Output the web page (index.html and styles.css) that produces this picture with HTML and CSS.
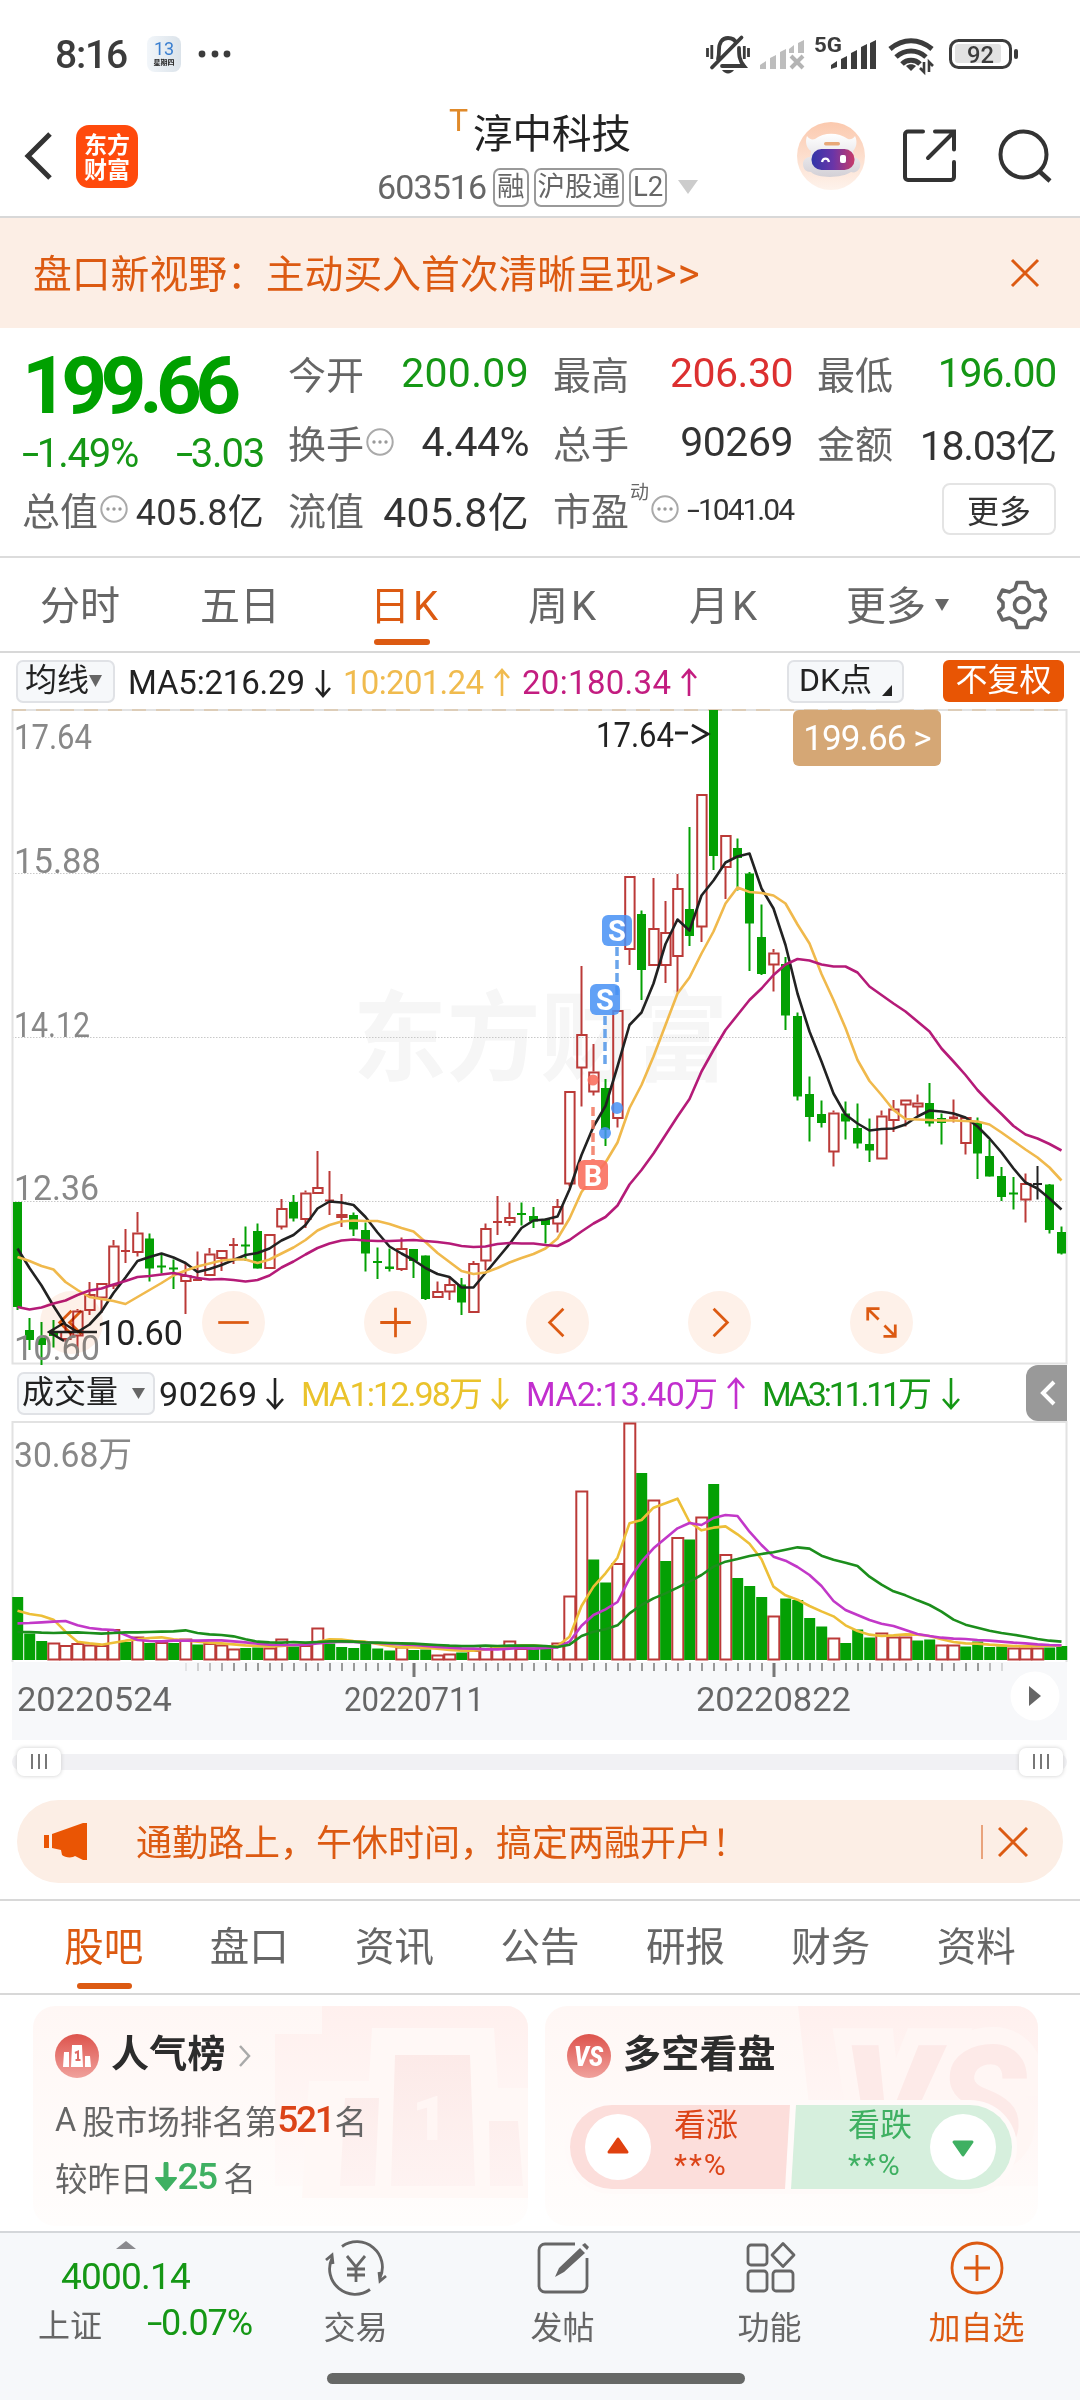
FILE: index.html
```html
<!DOCTYPE html>
<html lang="zh-CN">
<head>
<meta charset="utf-8">
<title>淳中科技 603516</title>
<link rel="stylesheet" href="styles.css">
</head>
<body>
<div class="phone">
  <div class="status">
    <span class="clock">8:16</span>
    <span class="cal"><b>13</b><i>星期四</i></span>
    <svg class="dots" width="34" height="10" viewBox="0 0 34 10"><circle cx="4" cy="5" r="3.4"/><circle cx="17" cy="5" r="3.4"/><circle cx="29" cy="5" r="3.4"/></svg>
    <svg class="sys" width="316" height="44" viewBox="704 32 316 44">
      <g fill="none" stroke="#3c3c3c" stroke-width="3.8">
        <path d="M718 59c1-3 1-6 1-9 0-7 3-12 9-12 4 0 7 2 8 5M739 48c0 7 0 12 5 18h-22M712 67.500l29.500-30" stroke-linecap="round"/>
        <path d="M707.500 48v9M711.800 45v14M748.500 48v9M744.300 46v13" stroke-width="2.800"/>
        <path d="M722 70h12c-3 4.500-9 4.500-12 0z" fill="#3c3c3c" stroke="none"/>
      </g>
      <g fill="#bdbdbd"><path d="M760 69v-4l6-4v8zM770 69V58l6-3v14zM780 69V52l6-3v20zM789 53v-4l5-4v8zM798 53V43l6-3v13z"/></g>
      <path d="M791 56l12 12M803 56l-12 12" stroke="#b4b4b4" stroke-width="4"/>
      <text x="814" y="52" textLength="28" lengthAdjust="spacingAndGlyphs" class="g5">5G</text>
      <path d="M831 69v-4l6-4v6zM841 69V59l6-3v13zM851 69V53l6-3v19zM861 69V47l6-3v25zM870 69V43l6-3v29z" fill="#3c3c3c"/>
      <g fill="none" stroke="#3c3c3c" stroke-width="5"><path d="M890 49c13-11 29-11 42 0M896 57c9-8 21-8 30 0M902 64c5-5 13-5 18 0"/></g>
      <path d="M906 66c3-2.500 7-2.500 10 0l-5 5z" fill="#3c3c3c"/>
      <path d="M924 62v10l-4-4M929 72V62l4 4" stroke="#3c3c3c" stroke-width="2.600" fill="none"/>
      <rect x="950.500" y="40.500" width="60" height="27" rx="8" fill="#fff" stroke="#3c3c3c" stroke-width="3"/>
      <rect x="955" y="44" width="46" height="19" rx="3" fill="#e2e2e2"/>
      <rect x="1014" y="49" width="4" height="10" rx="2" fill="#3c3c3c"/>
      <text x="967" y="63" textLength="27" lengthAdjust="spacingAndGlyphs" class="bat">92</text>
    </svg>
  </div>

  <header class="top">
    <svg class="back" width="30" height="52" viewBox="0 0 30 52"><path d="M26 4L4 26l22 22" fill="none" stroke="#333" stroke-width="5"/></svg>
    <div class="logo"><span>东方</span><span>财富</span></div>
    <div class="title">
      <div class="name"><sup>T</sup>淳中科技</div>
      <div class="code"><span class="num">603516</span><span class="tag">融</span><span class="tag">沪股通</span><span class="tag">L2</span>
        <svg width="20" height="14" viewBox="0 0 20 14"><path d="M0 0h20L10 14z" fill="#ccc"/></svg></div>
    </div>
    <svg class="robot" width="68" height="68" viewBox="0 0 68 68">
      <defs>
        <linearGradient id="halo" x1="0" y1="0" x2="0" y2="1"><stop offset="0" stop-color="#fbc9ae"/><stop offset="1" stop-color="#fef3ec"/></linearGradient>
        <linearGradient id="visor" x1="0" y1="0" x2="1" y2="0"><stop offset="0" stop-color="#3236a8"/><stop offset=".5" stop-color="#6a35a8"/><stop offset="1" stop-color="#c83a68"/></linearGradient>
        <linearGradient id="shell" x1="0" y1="0" x2="0" y2="1"><stop offset="0" stop-color="#fff"/><stop offset="1" stop-color="#d3d0d6"/></linearGradient>
      </defs>
      <circle cx="34" cy="34" r="34" fill="url(#halo)"/>
      <path d="M10 14c2 3 5 4 8 3 9-7 23-7 33 0 3 1 6-1 7-3 3 6 1 12-2 15l1 6c6 1 8 8 5 12-2 3-5 4-8 3-8 6-33 7-40 0-5 0-8-3-8-8 0-4 3-7 7-7l1-6c-5-3-6-10-4-15z" fill="url(#shell)"/>
      <rect x="27" y="20" width="16" height="3.500" rx="1.700" fill="#e8a878"/>
      <rect x="14.500" y="27" width="43" height="21" rx="10" fill="url(#visor)"/>
      <path d="M25 40c1-4.500 6-4.500 7 0" stroke="#fff" stroke-width="2.300" fill="none"/><rect x="43" y="33" width="6" height="8" rx="2" fill="#fff"/>
    </svg>
    <svg class="share" width="54" height="54" viewBox="0 0 54 54"><path d="M20 2.500H5a3 3 0 0 0-3 3V48a3 3 0 0 0 3 3h43a3 3 0 0 0 3-3V33M32 2.500h19v18M50 4L25 29" fill="none" stroke="#333" stroke-width="4" stroke-linecap="round"/></svg>
    <svg class="search" width="54" height="54" viewBox="0 0 54 54"><circle cx="25.500" cy="25.500" r="23" fill="none" stroke="#333" stroke-width="4"/><path d="M41 42l11 10" stroke="#333" stroke-width="4.500"/></svg>
  </header>

  <div class="banner"><span>盘口新视野：主动买入首次清晰呈现<b>&gt;&gt;</b></span>
    <svg width="30" height="30" viewBox="0 0 30 30"><path d="M2 2l26 26M28 2L2 28" stroke="#dc5a12" stroke-width="3"/></svg></div>

  <section class="quote">
    <div class="price"><strong>199.66</strong><div class="chg"><span><u>-</u>1.49%</span><span><u>-</u>3.03</span></div></div>
    <div class="cell c2"><label>今开</label><b class="g wide">200.09</b></div>
    <div class="cell c3"><label>最高</label><b class="r">206.30</b></div>
    <div class="cell c4"><label>最低</label><b class="g tight">196.00</b></div>
    <div class="cell c2 r2"><label>换手</label><svg class="info" viewBox="0 0 28 28"><use href="#i"/></svg><b>4.44%</b></div>
    <div class="cell c3 r2"><label>总手</label><b>90269</b></div>
    <div class="cell c4 r2"><label>金额</label><b class="tight">18.03亿</b></div>
    <div class="cell c1 r3"><label>总值</label><svg class="info" viewBox="0 0 28 28"><use href="#i"/></svg><b class="sm">405.8亿</b></div>
    <div class="cell c2 r3"><label>流值</label><b class="wide">405.8亿</b></div>
    <div class="cell c3 r3"><label>市盈</label><sup>动</sup><svg class="info" viewBox="0 0 28 28"><use href="#i"/></svg><b class="xs"><u>-</u>1041.04</b></div>
    <div class="cell c4 r3"><button class="more">更多</button></div>
    <svg width="0" height="0" class="defs"><defs><g id="i"><circle cx="14" cy="14" r="12.700" fill="none" stroke="#aaa" stroke-width="2"/><circle cx="8" cy="14" r="1.700" fill="#999"/><circle cx="14" cy="14" r="1.700" fill="#999"/><circle cx="20" cy="14" r="1.700" fill="#999"/></g></defs></svg>
  </section>

  <nav class="ktabs">
    <span>分时</span><span>五日</span><span class="on k">日K</span><span class="k">周K</span><span class="k">月K</span>
    <span>更多<svg width="14" height="12" viewBox="0 0 14 12"><path d="M0 0h14L7 12z" fill="#666"/></svg></span>
    <svg width="50" height="50" viewBox="-25 -25 50 50"><path d="M-5-22.500H5L7-16 12.500-13 19.500-15 23.500-7 19-2.500V2.500L23.500 7 19.500 15 12.500 13 7 16 5 22.500H-5L-7 16-12.500 13-19.500 15-23.500 7-19 2.500V-2.500L-23.500-7-19.500-15-12.500-13-7-16z" fill="none" stroke="#666" stroke-width="3.600" stroke-linejoin="round"/><circle r="7.500" fill="none" stroke="#666" stroke-width="3.600"/></svg>
  </nav>

  <div class="marow">
    <span class="box m1"><span>均线</span><svg width="13" height="12" viewBox="0 0 13 12"><path d="M0 0h13L6.500 12z" fill="#666"/></svg></span>
    <svg class="matext" width="580" height="50" viewBox="125 655 580 50">
      <text x="128" y="692.500" textLength="177" fill="#222">MA5:216.29</text><path d="M323 669v26m-7-8l7 8 7-8" stroke="#222"/>
      <text x="343" y="692.500" textLength="141" fill="#f0bb4e">10:201.24</text><path d="M502 695v-26m-7 8l7-8 7 8" stroke="#f0bb4e"/>
      <text x="522" y="692.500" textLength="149" fill="#c31d80">20:180.34</text><path d="M689 695v-26m-7 8l7-8 7 8" stroke="#c31d80"/>
    </svg>
    <span class="box m2"><span>DK点</span><svg width="10" height="11" viewBox="0 0 10 11"><path d="M10 0v11H0z" fill="#222"/></svg></span>
    <span class="adj">不复权</span>
  </div>

  <div class="kchart">
    <svg id="kplot" width="1080" height="656" viewBox="0 709 1080 656"></svg>
    <span class="cur">199.66 &gt;</span>
    <div class="tools">
      <span><svg viewBox="-32 -32 64 64"><path d="M0-12L-12 0 0 12M10-12L-2 0 10 12"/></svg></span>
      <span><svg viewBox="-32 -32 64 64"><path d="M-15.500 0h31"/></svg></span>
      <span><svg viewBox="-32 -32 64 64"><path d="M-15.500 0h31M0-15v30"/></svg></span>
      <span><svg viewBox="-32 -32 64 64"><path d="M6-14L-8 0 6 14"/></svg></span>
      <span><svg viewBox="-32 -32 64 64"><path d="M-6-14L8 0-6 14"/></svg></span>
      <span><svg viewBox="-32 -32 64 64"><path d="M-14-2v-12h12M-13-13l10 10M14 2v12H2M13 13L3 3"/></svg></span>
    </div>
  </div>

  <div class="volrow">
    <span class="box v1"><span>成交量</span><svg width="13" height="11" viewBox="0 0 13 11"><path d="M0 0h13L6.500 11z" fill="#666"/></svg></span>
    <svg class="matext" width="810" height="50" viewBox="158 1369 810 50">
      <text x="159" y="1407" textLength="98" fill="#222">90269</text><path d="M275 1379v30m-8-9l8 9 8-9" stroke="#222"/>
      <text x="301" y="1407" textLength="182" fill="#eac32c">MA1:12.98万</text><path d="M500 1379v30m-8-9l8 9 8-9" stroke="#eac32c"/>
      <text x="526" y="1407" textLength="192" fill="#c22fce">MA2:13.40万</text><path d="M736 1410v-30m-8 9l8-9 8 9" stroke="#c22fce"/>
      <text x="762" y="1407" textLength="170" fill="#159715">MA3:11.11万</text><path d="M951 1379v30m-8-9l8 9 8-9" stroke="#159715"/>
    </svg>
    <span class="fold"><svg width="16" height="26" viewBox="0 0 16 26"><path d="M14 2L3 13l11 11" fill="none" stroke="#fff" stroke-width="4"/></svg></span>
  </div>
  <svg id="vplot" width="1080" height="241" viewBox="0 1421 1080 241"></svg>
  <div class="axis">
    <svg id="axis" width="1055" height="78" viewBox="12 1662 1055 78"></svg>
  </div>
  <div class="slider"><i></i><span><b></b><b></b><b></b></span><span><b></b><b></b><b></b></span></div>

  <div class="promo">
    <svg width="44" height="38" viewBox="0 0 44 38"><path d="M0 12h5v13H0zM8 11L39 0h4v37h-4l-8-4c-2 2-10 2-13-1l-1-5-9-2z" fill="#ea5504"/></svg>
    <span>通勤路上，午休时间，搞定两融开户！</span>
    <em></em>
    <svg width="30" height="30" viewBox="0 0 30 30"><path d="M1 1l28 28M29 1L1 29" stroke="#dc5a12" stroke-width="3"/></svg>
  </div>

  <nav class="ntabs"><span class="on">股吧</span><span>盘口</span><span>资讯</span><span>公告</span><span>研报</span><span>财务</span><span>资料</span></nav>

  <section class="cards">
    <article class="card">
      <svg class="ghost" width="495" height="220" viewBox="33 2006 495 220"><defs>
        <linearGradient id="gb" x1="0" y1="0" x2="0" y2="1"><stop offset="0" stop-color="#fff0ee"/><stop offset="1" stop-color="#fffaf9"/></linearGradient>
        <linearGradient id="gp" x1="0" y1="0" x2="0" y2="1"><stop offset="0" stop-color="#fceae8"/><stop offset="1" stop-color="#fef3f2"/></linearGradient></defs>
        <path d="M322 2006h206v180H275V2034h47z" fill="url(#gb)"/>
        <path d="M372 2028h122l4 60h30v110H302l7-117h60z" fill="#fff8f6"/>
        <path d="M345 2098h34l-4 88h-35zM395 2055h75l5 131h-84zM489 2121h29l5 65h-33z" fill="url(#gp)"/><text x="412" y="2140" class="one">1</text></svg>
      <h3><svg width="44" height="44" viewBox="0 0 44 44"><defs><linearGradient id="rd" x1="0" y1="0" x2="0" y2="1"><stop offset="0" stop-color="#dd534c"/><stop offset="1" stop-color="#f0a19c"/></linearGradient></defs><circle cx="22" cy="22" r="22" fill="url(#rd)"/><path d="M9 18h5v15H8zM17 11h10l1 22H16zM30 22h5l1 11h-6z" fill="#fff"/><path d="M20 19l3-1.500v9M20.500 26h5" stroke="#dd6b65" stroke-width="2" fill="none"/></svg><span>人气榜</span><svg width="14" height="22" viewBox="0 0 14 22"><path d="M2 1l9 10-9 10" fill="none" stroke="#aaa" stroke-width="2.500"/></svg></h3>
      <p>A<s></s>股市场排名第<b class="o">521</b>名</p>
      <p>较昨日<svg width="25" height="30" viewBox="0 0 25 30"><path d="M13 2v18" stroke="#3fb062" stroke-width="5" stroke-linecap="round"/><path d="M3 16h20L13 28z" fill="#3fb062" stroke="#3fb062" stroke-width="2" stroke-linejoin="round"/></svg><b class="gg">25</b><s></s>名</p>
    </article>
    <article class="card">
      <svg class="ghost" width="493" height="220" viewBox="545 2006 493 220"><path d="M798 2006h240v180H818z" fill="url(#gb)"/><text x="842" y="2156" textLength="184" lengthAdjust="spacingAndGlyphs" class="vsbig">VS</text></svg>
      <h3><svg width="44" height="44" viewBox="0 0 44 44"><circle cx="22" cy="22" r="22" fill="url(#rd)"/><text x="7" y="32" textLength="29" lengthAdjust="spacingAndGlyphs" class="vs">VS</text></svg><span>多空看盘</span></h3>
      <div class="vote">
        <svg class="votebg" width="452" height="94" viewBox="-5 -5 452 94"><rect x="-5" y="-5" width="452" height="94" rx="47" fill="#fffaf9"/><path d="M42 0h178l-5 84H42a42 42 0 0 1 0-84z" fill="#fcdedb"/><path d="M226 0h174a42 42 0 0 1 0 84H221z" fill="#d6efdd"/><circle cx="48" cy="42" r="33" fill="#fff"/><circle cx="393" cy="42" r="33" fill="#fff"/><path d="M48 34l9 13H39z" fill="#e0410f" stroke="#e0410f" stroke-width="3" stroke-linejoin="round"/><path d="M393 50l9-13h-18z" fill="#3fb062" stroke="#3fb062" stroke-width="3" stroke-linejoin="round"/></svg>
        <div class="up">看涨<small><span>**</span>%</small></div><div class="dn">看跌<small><span>**</span>%</small></div>
      </div>
    </article>
  </section>

  <footer class="bar">
    <div class="idx"><svg width="20" height="8" viewBox="0 0 20 8"><path d="M0 8L10 0l10 8z" fill="#8a8a8e"/></svg><b>4000.14</b><div><span>上证</span><i><u>-</u>0.07%</i></div></div>
    <div class="it"><svg viewBox="-32 -28 64 56"><path d="M-14-21.500A25.500 25.500 0 0 1 24 10M14 21.500A25.500 25.500 0 0 1-24-10M-30-8l6-5 1 9M30 8l-6 5-1-9M-9-12L0-1 9-12M0-1v15M-9 1H9M-9 7H9"/></svg>交易</div>
    <div class="it"><svg viewBox="-32 -28 64 56"><path d="M12-24h-30a6 6 0 0 0-6 6v36a6 6 0 0 0 6 6h36a6 6 0 0 0 6-6v-28"/><path d="M-8 9l4-9L17-20l5 5L1 4zM19-23l3-2 4 4-2 3z" fill="#666" stroke="none"/></svg>发帖</div>
    <div class="it"><svg viewBox="-32 -28 64 56"><rect x="-22" y="-23" width="19" height="20" rx="3"/><rect x="-22" y="3" width="19" height="20" rx="3"/><rect x="3" y="3" width="20" height="20" rx="3"/><path d="M13-24.500L24-13 13-1.500 2-13z" stroke-linejoin="round"/></svg>功能</div>
    <div class="it on"><svg viewBox="-32 -28 64 56"><circle r="25"/><path d="M-13 0h26M0-13v26"/></svg>加自选</div>
    <div class="home"></div>
  </footer>
</div>
<script src="chart.js"></script>
</body>
</html>
```
FILE: styles.css
```css
* { box-sizing: border-box; }
body { margin: 0; background: #fff; color: #333; font-family: Roboto, "Noto Sans CJK SC", sans-serif; }
.phone { width: 1080px; height: 2400px; overflow: hidden; display: flex; flex-direction: column; }
.phone > * { flex: none; }
svg { display: block; flex: none; }
b, i, em { font-weight: 400; font-style: normal; }
/* minus sign drawn as a stretched hyphen */
u { display: inline-block; text-decoration: none; transform: scaleX(1.55); transform-origin: left; margin-right: 5px; }

.status { height: 108px; padding: 0 60px 0 55px; display: flex; align-items: center; }
.clock { font-size: 39px; font-weight: 500; color: #3c3c3c; width: 92px; letter-spacing: -1.2px; margin-top: 1px; }
.cal { width: 34px; height: 36px; border-radius: 8px; background: linear-gradient(90deg, #f2f6fa, #dbe3ea); display: flex; flex-direction: column; align-items: center; }
.cal b { font-size: 18px; line-height: 20px; margin-top: 3px; color: #3a7fd0; }
.cal i { font-size: 7px; line-height: 8px; color: #222; font-weight: 700; }
.dots { margin-left: 17px; fill: #3c3c3c; }
.sys { margin-left: auto; }
.g5 { font-size: 20px; font-weight: 700; fill: #3c3c3c; }
.bat { font-size: 24px; font-weight: 500; fill: #3c3c3c; }

.top { height: 110px; border-bottom: 2px solid #d8d8d8; padding: 0 28px 0 24px; display: flex; align-items: center; }
.top > svg { margin-top: -12px; }
.logo { width: 62px; height: 63px; margin: -12px 0 0 22px; border-radius: 13px; background: #ff4a0c; color: #fff; font: 700 23px/25px "Noto Sans CJK SC", sans-serif; display: flex; flex-direction: column; align-items: center; justify-content: center; }
.title { width: 330px; margin-left: 238px; align-self: stretch; }
.name { font-size: 39.500px; line-height: 50px; height: 52px; padding: 2px 0 0 73px; color: #222; display: flex; }
.name sup { font-size: 32px; line-height: 20px; width: 24px; color: #e08a2a; }
.code { display: flex; align-items: center; gap: 5px; height: 42px; margin-top: 6px; color: #666; }
.code .num { font-size: 34px; width: 111px; letter-spacing: -.9px; margin-left: 1px; }
.tag { height: 39px; border: 2px solid #999; border-radius: 7px; font-size: 27.500px; line-height: 34px; padding: 0 2px; }
.code svg { margin-left: 6px; }
.robot { margin-left: 91px; }
.share { margin-left: 38px; }
.search { margin-left: 41px; }

.banner { height: 110px; background: #fceee5; color: #dc5a12; padding: 0 40px 0 33px; font-size: 38.800px; display: flex; align-items: center; justify-content: space-between; }
.banner span { margin-top: -5px; }
.banner b { font-size: 42px; line-height: 30px; letter-spacing: 1px; margin-left: 1px; }

.quote { height: 230px; border-bottom: 2px solid #dcdcdc; padding: 10px 23px 0 22px; display: grid; grid-template-columns: 242px 241px 240px 239px; column-gap: 24px; grid-template-rows: 70px 68px 68px; }
.quote { column-gap: 24px; }
.price { grid-row: 1 / 3; grid-column: 1; color: #00a000; }
.price strong { display: block; font-size: 80px; line-height: 88px; letter-spacing: -6.700px; margin-top: 4px; }
.chg { display: flex; justify-content: space-between; font-size: 40px; line-height: 46px; margin-top: 1px; letter-spacing: -1.200px; color: #159715; }
.cell { display: flex; align-items: center; color: #333; height: 70px; }
.c1 { grid-column: 1; } .c2 { grid-column: 2; } .c3 { grid-column: 3; } .c4 { grid-column: 4; }
.r2 { grid-row: 2; height: 68px; } .r3 { grid-row: 3; height: 66px; }
.cell label { font-size: 38px; color: #666; margin-top: -2px; }
.cell b { margin-left: auto; font-size: 41px; letter-spacing: -.5px; white-space: nowrap; }
.cell b.wide { letter-spacing: .3px; }
.cell b.tight { letter-spacing: -1.300px; }
.cell b.sm { font-size: 36px; letter-spacing: .3px; }
.cell b.xs { font-size: 30px; letter-spacing: -2px; }
.cell .g { color: #159715; } .cell .r { color: #dc3030; }
.cell sup { font-size: 19px; line-height: 20px; color: #666; align-self: flex-start; margin: 7px 0 0 1px; }
.info { width: 28px; height: 28px; margin: 0 0 0 2px; }
.defs { position: absolute; }
.more { margin-left: auto; width: 114px; height: 52px; padding: 0; border: 2px solid #e4e4e4; border-radius: 8px; background: #fff; font: 32px/44px "Noto Sans CJK SC", sans-serif; color: #333; }

.ktabs { height: 95px; border-bottom: 2px solid #d8d8d8; padding: 0 30px 0 40px; display: grid; grid-template-columns: 160px 170px 158px 161px 157px 151px 1fr; align-items: center; font-size: 40px; color: #666; }
.ktabs span { display: flex; align-items: center; height: 93px; padding-bottom: 4px; position: relative; }
.ktabs .k { letter-spacing: 3px; }
.ktabs span svg { margin: 4px 0 0 9px; }
.on { color: #dc5a12; }
.ktabs .on::after { content: ""; position: absolute; left: 4px; bottom: 6px; width: 56px; height: 6px; border-radius: 3px; background: #dc5a12; }

.marow { height: 56px; padding: 0 16px; display: flex; align-items: center; }
.box { height: 43px; border: 2px solid #e0e2e6; border-radius: 7px; background: #f6f8fa; font-size: 32px; line-height: 38px; color: #222; display: flex; align-items: center; white-space: nowrap; }
.box span { margin-top: -3px; }
.m1 { width: 99px; padding-left: 7px; }
.matext { margin-left: 10px; font-size: 33px; }
.matext path { fill: none; stroke-width: 2.600; }
.m2 { width: 117px; margin-left: 82px; padding-left: 10px; }
.m2 svg { margin: 18px 0 0 10px; }
.adj { margin-left: 39px; width: 121px; height: 42px; border-radius: 6px; background: #e85504; color: #fff; font-size: 32px; line-height: 40px; text-align: center; }

.kchart { height: 656px; position: relative; }
.wm { font: 700 98px "Noto Sans CJK SC", sans-serif; fill: #f6f6f6; }
.yl { font-size: 35px; fill: #888; }
.bl { font-size: 35px; fill: #222; }
.mk { font: 700 29px Roboto, sans-serif; fill: #fff; text-anchor: middle; }
.cur { position: absolute; left: 793px; top: 1px; width: 148px; height: 56px; border-radius: 6px; background: #d5a775; color: #fff; font-size: 35px; line-height: 57px; letter-spacing: -.9px; text-align: center; white-space: nowrap; }
.tools { position: absolute; left: 40px; top: 582px; display: flex; gap: 99px; mix-blend-mode: multiply; }
.tools span { width: 63px; height: 63px; border-radius: 50%; background: #fef1e9; }
.tools svg { width: 63px; height: 63px; fill: none; stroke: #dc5a12; stroke-width: 2.800; }

.volrow { height: 56px; padding-left: 17px; display: flex; align-items: center; }
.v1 { width: 138px; padding-left: 3px; }
.v1 svg { margin-left: 14px; }
.volrow .matext { margin-left: 3px; font-size: 34px; }
.fold { width: 41px; height: 56px; margin-left: 58px; border-radius: 12px 0 0 12px; background: #999; display: flex; align-items: center; padding-left: 14px; }
.axis { height: 79px; padding-left: 12px; width: 1067px; }
.axis svg { background: #f7f8fa; }
.ax { font-size: 34px; fill: #666; }

.slider { height: 39px; margin: 1px 13px 0 12px; padding: 0 4px 0 5px; display: flex; justify-content: space-between; align-items: center; position: relative; }
.slider > i { position: absolute; left: 0; right: 0; top: 12px; height: 16px; border-radius: 8px; background: #f1f1f4; }
.slider span { position: relative; width: 44px; height: 28px; border-radius: 7px; background: #fff; box-shadow: 0 0 4px #ccc; display: flex; align-items: center; justify-content: center; gap: 5px; }
.slider b { width: 2px; height: 15px; background: #777; }

.promo { height: 83px; margin: 19px 17px 0; border-radius: 42px; background: #fceee5; color: #dc5a12; padding: 0 35px 0 27px; display: flex; align-items: center; font-size: 36px; }
.promo span { margin: -4px 0 0 48px; flex: 1; }
.promo em { width: 2px; height: 34px; background: #e9a37c; margin-right: 15px; }

.ntabs { height: 96px; margin-top: 16px; border-top: 2px solid #d8d8d8; border-bottom: 2px solid #d8d8d8; padding: 0 31px; display: grid; grid-template-columns: repeat(7, 1fr); text-align: center; font-size: 39.500px; line-height: 94px; color: #666; }
.ntabs span { position: relative; }
.ntabs .on { color: #dc5a12; }
.ntabs .on::after { content: ""; position: absolute; left: 46px; bottom: 6px; width: 55px; height: 6px; border-radius: 3px; background: #dc5a12; }

.cards { height: 236px; padding: 11px 42px 0 33px; display: grid; grid-template-columns: 495px 493px; gap: 17px; }
.card { position: relative; height: 220px; border-radius: 22px; overflow: hidden; background: linear-gradient(#fff7f5, #fffdfc); padding: 21px 22px 0; }
.card > * { position: relative; }
.card .ghost { position: absolute; left: 0; top: 0; }
.one { font: 900 62px Roboto, sans-serif; fill: #fff6f4; }
.vsbig { font: italic 900 156px Roboto, sans-serif; fill: #fdeae8; stroke: #fff6f4; stroke-width: 34px; paint-order: stroke; }
.vs { font: italic 900 27px Roboto, sans-serif; fill: #fff; }
.card h3 { margin: 0; height: 58px; display: flex; align-items: center; gap: 12px; font-size: 38px; line-height: 50px; font-weight: 700; color: #2c2c2c; }
.card h3 span { margin-top: -4px; letter-spacing: .2px; }
.card p { margin: 10px 0 0; height: 49px; display: flex; align-items: center; font-size: 32.500px; color: #666; }
.card p + p { margin-top: 8px; }
.card p s { width: 6px; }
.card p b { font-size: 37px; font-weight: 500; letter-spacing: -2.300px; padding-right: 1px; }
.card p .o { color: #dc4418; }
.card p .gg { color: #3fb062; letter-spacing: -1.500px; }
.vote { height: 84px; margin: 20px 0 0 3px; width: 442px; }
.card:last-child .votebg { position: absolute; left: -5px; top: -5px; }
.vote div { position: absolute; top: -2px; font-size: 32px; line-height: 44px; }
.up { left: 104px; color: #dc4418; }
.dn { left: 278px; color: #3fb062; }
.vote small { display: block; font-size: 30px; line-height: 40px; margin-top: -2px; }
.vote small span { letter-spacing: 2px; }

.bar { flex: 1; border-top: 2px solid #d4d7da; background: #f6f8fa; position: relative; display: grid; grid-template-columns: 252px 207px 207px 207px 207px; font-size: 32px; color: #666; }
.bar .idx { padding: 8px 0 0 38px; }
.idx svg { margin-left: 78px; }
.idx b { display: block; font-size: 37px; line-height: 56px; color: #159715; padding-left: 23px; letter-spacing: -.8px; }
.idx div { display: flex; align-items: center; justify-content: space-between; height: 36px; }
.idx i { font-size: 36px; color: #159715; letter-spacing: -1.100px; }
.it { display: flex; flex-direction: column; align-items: center; padding-top: 7px; line-height: 46px; }
.bar .on { color: #dc5a12; }
.it svg { width: 64px; height: 56px; fill: none; stroke: currentColor; stroke-width: 2.800; margin-bottom: 9px; }
.home { position: absolute; left: 327px; top: 140px; width: 418px; height: 11px; border-radius: 6px; background: #666866; }
```
FILE: chart.js
```javascript
// One row per session: colour, high, body top, body bottom, low (px below y=700), volume height.
const rows = `G 502 502 607 610 63|G 618 630 640 650 26.5|G 622 637.5 645 665 19|G 620 633 636 647.5 17.5|R 624.5 631 639 642 15|R 609 610.5 635.5 656 17|R 582 594 610 615 15.5|R 583 583 597.5 613 15|R 540 545.5 585.5 589 31|R 529 551 551 563 18|R 512 532.5 552 556.5 23.5|G 533.5 538.5 568.5 581.5 17|G 554 566.5 566.5 573.5 18|G 559.5 568.5 568.5 589 17|R 564 575 581 614 21.5|R 551.5 580 580 581 15.5|R 548 553.5 575 575 17|R 550 550 558 571 15.5|R 538 545 547 564 11.5|G 526.5 545.5 545.5 561 12|G 523.5 531 568.5 568.5 12.5|R 534 534 568 568 12.5|R 499 508 526.5 529.5 21.5|G 495 502 518.5 521.5 13.5|R 490.5 492.5 519 528 15|R 451 487 493 493 32.5|R 471 500.5 500.5 515 16.5|R 494 514 517 527 13|G 512.5 515 529.5 536 12|G 522.5 530 553.5 571.5 18|G 547.5 562 564 579 11.5|G 548.5 566.5 569 571.5 9.5|R 537.5 548 569 571 13.5|G 549 549 561 578 10|G 555.5 555.5 599 600 10.5|R 581.5 591 597 597 5.5|R 577 584 591.5 600 6.5|G 578 584.5 602.5 615 7.5|R 561 563 612 612 10|R 523.5 528 560.5 570 15|R 496 522 522 535 12|R 502.5 517 522 526 19.5|G 502.5 514 514 525.5 12|G 507 516 521.5 528 12.5|G 518.5 519 525 543.5 11.5|R 499 506 523.5 532.5 17.5|R 391 391 483.5 486.5 64.5|R 266 334 367.5 406.5 169.5|R 344 371.5 391.5 395.5 100.5|G 379 388 430 446 77.5|R 310 310 418 427.5 97|R 176 176 249 265 237.5|G 210.5 214 270 300 187|R 178 228 265 265 160.5|R 201 232 265 283 99|R 174 188 256 292.5 123|G 127 209 236 246 120.5|R 94 94 226.5 242 143.5|G 10 10 156 170 176|R 135 135 167 199 106|G 138.5 148 158 190.5 82|G 172 173.5 223.5 271 74|G 204.5 237 274 275 63|R 249 252.5 264.5 291.5 44.5|G 257 264 315.5 330 61.5|G 312.5 316 396.5 400.5 60|G 376.5 394 417 441.5 42|G 400.5 414 423 427.5 33.5|R 410.5 412.5 451.5 466.5 22.5|G 401.5 413.5 421.5 439.5 17|G 403.5 428 443.5 448.5 30.5|G 418.5 444 450.5 462 22.5|R 410.5 415.5 458.5 458.5 27.5|R 400 408.5 420 432 23.5|R 399.5 399.5 404.5 426.5 23.5|R 394.5 402.5 406.5 415 19.5|G 383 403 423.5 426.5 20.5|G 413.5 418 423 444.5 15.5|R 399.5 416.5 419 422.5 15.5|R 417 417 443 454.5 13.5|G 417.5 422.5 453.5 479 18.5|G 440 456 476.5 476.5 13|G 467 476 497 501 13.5|G 477 493.5 495.5 509.5 12.5|R 473.5 483 499.5 522.5 12.5|K 466 484 484 499.5 12.5|G 484 484.5 530 533.5 12.5|G 526.5 532 553.5 554.5 14`.split('|').map(r => r.split(' '));
// Sessions whose volume bar colour differs from the candle.
const volG = [9, 15, 26, 27, 48, 54, 75, 79];
const volR = [3, 12, 42, 77, 83];

const ma5 = [548.5,568,585.5,606,624.5,632,624.5,611.5,593,577.5,561,557,553.5,557.5,563,572,569,565,560,555,553,548.5,540.5,535,525,508.5,501.5,502.5,505,517,532.5,546.5,553.5,560,568,574,577,587.5,587.5,573,558.5,544,528,520.5,519.5,516.5,489.5,455,426.5,406,366.5,325,312.5,283.5,244,219.5,230.5,195.5,180.5,162.5,156.5,153.5,188.5,208.5,245,293.5,331.5,361.5,393.5,414.5,423.5,430.5,429,428.5,424.5,416.5,410.5,411.5,413.5,417.5,426.5,438.5,452.5,468.5,482.5,488.5,498.5,509.5];
const ma10 = [557,561,566,569.5,582,590,597,599,601,604,597,590,583,575.5,570.5,566.5,563.5,560.5,559.5,559.5,563,559.5,553.5,547.5,540,530.5,525,521.5,520.5,521,521,524,528,531.5,542,553,562,571,574,572.5,568,562.5,558,554,548.5,538.5,518.5,492,476.5,462.5,442.5,408,385,356.5,325,293.5,277.5,253.5,231.5,203.5,187.5,192,193,195.5,203.5,224.5,243.5,274,300,328,360,381,395,410,419,419.5,420,420.5,420.5,421,421.5,424.5,432.5,441,449.5,457.5,467.5,480.5];
const ma20 = [607,609.5,607.5,603.5,600.5,595,590.5,588.5,584.5,581,577,576,574.5,573,575.5,578,579.5,579,580,581.5,580,575.5,567.5,561.5,554.5,548,543.5,540.5,539.5,540.5,541,541,540.5,540,541,542,543.5,546,547,546.5,544,543,543.5,543.5,545,546,540,531.5,523.5,517,505.5,484.5,470,453.5,435,416.5,399,371.5,350,330,315,300,288.5,275,264.5,259,260.5,264.5,266.5,266.5,272.5,286.5,295,303.5,311.5,321.5,331.5,348.5,361.5,375,390,402.5,414,426,434.5,438.5,444,450.5];
// Volume averages, in thirds of a pixel below y=1360.
const v1 = [752,762,767,779,815,845,850,854,848,842,838,834,832,838,841,845,848,850,853,856,858,859,858,855,852,846,838,839,843,845,852,858,862,862,864,866,870,872,872,868,864,860,856,856,860,858,830,738,680,640,593,490,480,443,430,416,486,511,503,499,523,551,598,680,706,719,738,754,769,796,813,824,828,826,823,824,828,838,846,850,851,854,856,858,859,858,857,857];
const v2 = [790,789,787,785,783,796,804,808,810,825,840,843,844,842,842,842,841,841,844,847,851,854,855,855,854,850,847,845,846,848,849,851,853,855,858,861,863,865,866,868,868,866,864,866,864,862,845,797,765,748,726,656,605,565,535,505,489,495,474,465,468,515,555,590,602,621,645,678,723,750,765,780,791,798,810,822,828,833,836,837,840,842,845,848,850,853,855,856];
const v3 = [816,816,818,819,818,817,819,821,819,817,817,816,815,814,811,819,823,825,829,838,845,847,848,846,848,846,844,844,845,847,848,849,850,851,853,855,857,858,858,857,858,857,857,857,858,861,854,828,815,808,796,760,735,715,700,683,665,645,620,605,597,588,582,577,569,562,566,587,599,608,618,650,674,694,706,721,735,755,779,794,803,812,819,824,830,837,842,845];

const GREEN = '#04a004', RED = '#bb3a38';
const cx = i => 17.5 + 12 * i;
const line = (a, f, c) => `<polyline fill="none" stroke="${c}" stroke-width="2.6" stroke-linejoin="round" points="${a.map((v, i) => cx(i) + ',' + f(v)).join(' ')}"/>`;
const text = (x, y, w, s, c) => `<text x="${x}" y="${y}" textLength="${w}" lengthAdjust="spacingAndGlyphs" class="${c}">${s}</text>`;
const seg = (x1, y1, x2, y2, c, more) => `<path d="M${x1} ${y1}L${x2} ${y2}" stroke="${c}" ${more || ''}/>`;

let k = text(353, 1073, 375, '东方财富', 'wm');
[873.5, 1037.5, 1201.5].forEach(y => { k += seg(12, y, 1067, y, '#c8c8c8', 'stroke-dasharray="1.5 1.5"'); });
k += '<rect x="12.500" y="710" width="1054" height="653.500" fill="none" stroke="#e2e2e2" stroke-width="2"/>';
k += seg(12, 710, 1067, 710, '#d8b88e', 'stroke-dasharray="14 10"');
rows.forEach((r, i) => {
  const x = cx(i), [h, t, b, l] = r.slice(1, 5).map(v => +v + 700);
  const c = r[0] === 'G' ? GREEN : r[0] === 'R' ? RED : '#222';
  const w = 'stroke-width="2"';
  if (r[0] === 'R' && b - t > 2.5) {
    k += seg(x, h, x, t, c, w) + seg(x, b, x, l, c, w);
    k += `<rect x="${x - 4.3}" y="${t + 1}" width="9.4" height="${Math.max(b - t - 1, 1)}" fill="none" stroke="${c}" stroke-width="2"/>`;
  } else {
    k += seg(x, h, x, l, c, w);
    k += `<rect x="${x - 4.5}" y="${b - t < 2.5 ? t - 1 : t}" width="9" height="${Math.max(b - t, 2)}" fill="${c}"/>`;
  }
});
const main = v => v + 700;
k += line(ma5, main, '#222') + line(ma10, main, '#f0b94c') + line(ma20, main, '#b51b78');
k += text(14, 749, 78, '17.64', 'yl') + text(14, 873, 87, '15.88', 'yl') + text(14, 1037, 76, '14.12', 'yl') + text(14, 1200, 85, '12.36', 'yl') + text(14, 1360, 86, '10.60', 'yl');
k += text(97, 1345, 86, '10.60', 'bl') + '<path d="M64 1323L49 1332l15 9M49 1332h48" fill="none" stroke="#222" stroke-width="2.400"/>';
k += text(596, 747, 78, '17.64', 'bl') + '<path d="M675 733h13M692 725l16 9-16 9" fill="none" stroke="#222" stroke-width="2.800"/>';
const dash = 'stroke-width="3.500" stroke-dasharray="9 4" stroke-opacity=".85"';
k += seg(617, 947, 617, 998, '#5095e8', dash) + seg(605, 1016, 605, 1068, '#5095e8', dash) + seg(593, 1107, 593, 1160, '#f2775f', dash);
k += '<g fill="#4690f5" fill-opacity=".85"><rect x="602" y="915" width="30" height="31" rx="6"/><rect x="590" y="984" width="30" height="31" rx="6"/><circle cx="617" cy="1108" r="6"/><circle cx="605" cy="1133" r="6"/></g>';
k += '<g fill="#f9705f" fill-opacity=".9"><rect x="578" y="1160" width="30" height="30" rx="6"/><circle cx="593" cy="1080" r="5.500"/></g>';
k += '<text x="617" y="941" class="mk">S</text><text x="605" y="1010" class="mk">S</text><text x="593" y="1186" class="mk">B</text>';
document.getElementById('kplot').innerHTML = k;

let v = '<path d="M12.500 1662V1422H1066.500V1662" fill="none" stroke="#e2e2e2" stroke-width="2"/>';
rows.forEach((r, i) => {
  const x = cx(i), h = +r[5];
  const green = volG.includes(i) || (r[0] === 'G' && !volR.includes(i));
  v += green ? `<rect x="${x - 5.3}" y="${1660 - h}" width="11" height="${h}" fill="${GREEN}"/>`
    : `<rect x="${x - 5.2}" y="${1661 - h}" width="11" height="${h - 1.5}" fill="#fff" stroke="${RED}" stroke-width="2"/>`;
});
const vol = n => 1360 + n / 3;
v += line(v1, vol, '#edbf38') + line(v2, vol, '#c238c8') + line(v3, vol, '#1c8e1c');
v += text(14, 1467, 118, '30.68万', 'yl');
document.getElementById('vplot').innerHTML = v;

let a = '';
for (let i = 14; i <= 82; i++) {
  const big = i === 33 || i === 63, fade = i < 18 ? (i - 13) / 5 : i > 80 ? (83 - i) / 3 : 1;
  a += seg(cx(i) + .5, 1663, cx(i) + .5, big ? 1677 : 1671, big ? '#777' : '#999', `stroke-width="${big ? 3 : 2}" opacity="${fade}"`);
}
a += text(17, 1711, 155, '20220524', 'ax') + text(344, 1711, 140, '20220711', 'ax') + text(696, 1711, 155, '20220822', 'ax');
a += '<circle cx="1035" cy="1696" r="24.500" fill="#fff"/><path d="M1029 1686l12 10-12 10z" fill="#666"/>';
document.getElementById('axis').innerHTML = a;
```
